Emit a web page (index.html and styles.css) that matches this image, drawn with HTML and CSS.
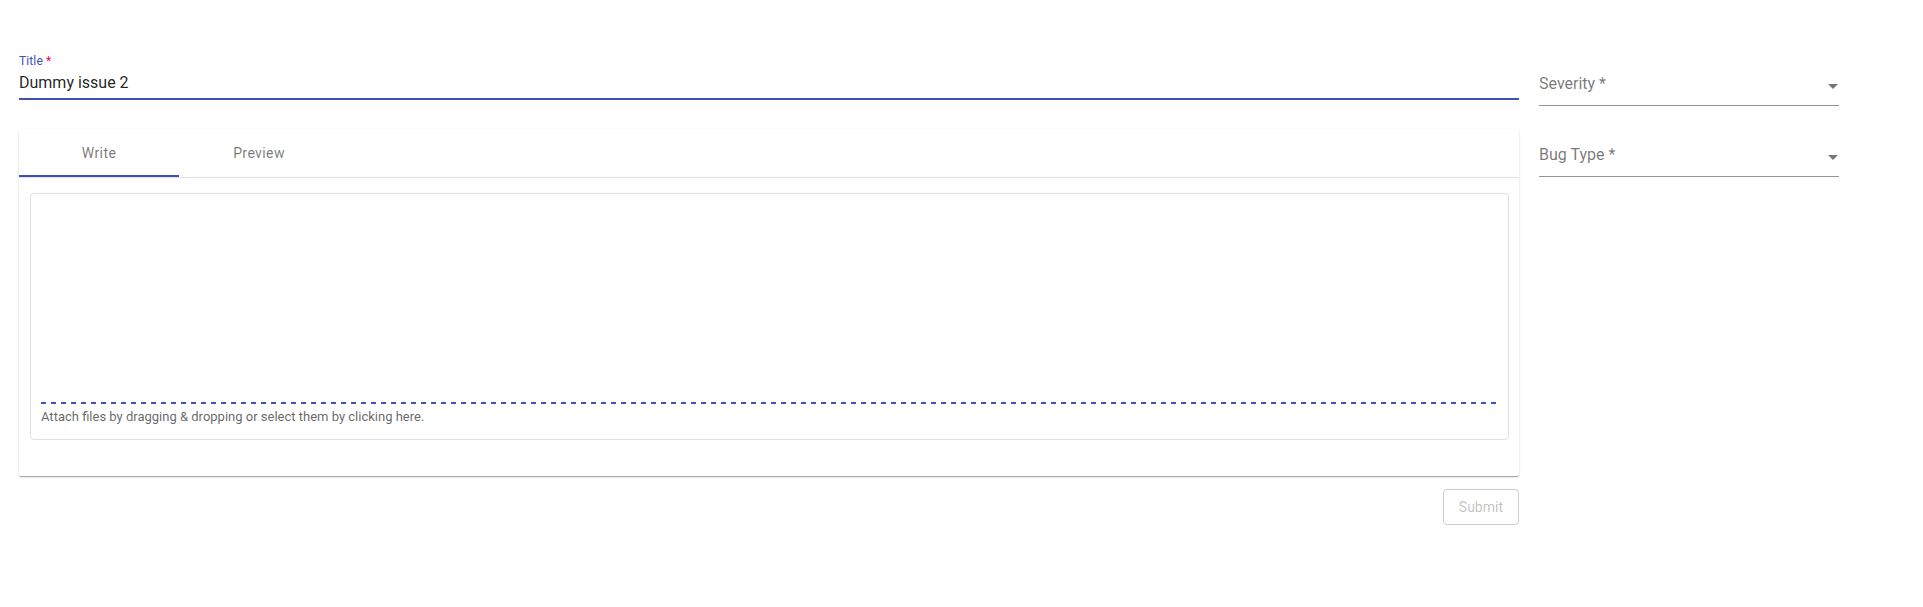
FILE: index.html
```html
<!DOCTYPE html>
<html lang="en">
<head>
<meta charset="utf-8">
<title>New issue</title>
<link rel="stylesheet" href="styles.css">
</head>
<body>
<div class="page">
  <div class="main">
    <div class="title-field">
      <label class="title-label">Title<span class="asterisk"> *</span></label>
      <div class="title-input">Dummy issue 2</div>
    </div>
    <div class="card">
      <div class="tabs">
        <div class="tab tab-active">Write</div>
        <div class="tab">Preview</div>
      </div>
      <div class="card-body">
        <div class="editor">
          <div class="editor-area"></div>
          <div class="dashes"></div>
          <div class="attach">Attach files by dragging &amp; dropping or select them by clicking here.</div>
        </div>
      </div>
    </div>
    <div class="actions">
      <button class="submit" disabled>Submit</button>
    </div>
  </div>
  <div class="side">
    <div class="select">
      <span class="select-label">Severity *</span>
      <svg class="arrow" width="10" height="5" viewBox="0 0 10 5"><path d="M0 0l5 5 5-5z" fill="rgba(0,0,0,0.54)"/></svg>
    </div>
    <div class="select select-second">
      <span class="select-label">Bug Type *</span>
      <svg class="arrow" width="10" height="5" viewBox="0 0 10 5"><path d="M0 0l5 5 5-5z" fill="rgba(0,0,0,0.54)"/></svg>
    </div>
  </div>
</div>
</body>
</html>
```
FILE: styles.css
```css
html, body {
  margin: 0;
  padding: 0;
  background: #ffffff;
}
body {
  font-family: Roboto, "Liberation Sans", Arial, sans-serif;
  color: rgba(0, 0, 0, 0.87);
}
.page {
  display: flex;
  align-items: flex-start;
  gap: 20px;
  padding: 55px 84px 0 19px;
}
.main {
  flex: 1;
  min-width: 0;
}
.side {
  width: 300px;
  flex: none;
  padding-top: 15px;
}
.title-field {
  display: flex;
  flex-direction: column;
}
.title-label {
  font-size: 12px;
  line-height: 12px;
  height: 12px;
  color: #3f51b5;
  letter-spacing: 0.01em;
}
.asterisk {
  color: #f50057;
}
.title-input {
  font-size: 16px;
  line-height: 19px;
  padding: 6px 0 6px;
  border-bottom: 2px solid #3f51b5;
  color: rgba(0, 0, 0, 0.87);
}
.card {
  margin-top: 29px;
  background: #fff;
  border-radius: 2px;
  box-shadow: 0 2px 1px -1px rgba(0,0,0,0.2), 0 1px 1px 0 rgba(0,0,0,0.14), 0 1px 3px 0 rgba(0,0,0,0.12);
}
.tabs {
  display: flex;
  height: 48px;
  border-bottom: 1px solid #e0e0e0;
}
.tab {
  width: 160px;
  height: 48px;
  box-sizing: border-box;
  display: flex;
  align-items: center;
  justify-content: center;
  padding-bottom: 1px;
  font-size: 14px;
  font-weight: 400;
  letter-spacing: 0.02857em;
  color: rgba(0, 0, 0, 0.54);
}
.tab-active {
  border-bottom: 2px solid #3f51b5;
  padding-top: 1px;
  padding-bottom: 0;
}
.card-body {
  padding: 15px 10px 36px 11px;
}
.editor {
  border: 1px solid #e0e0e0;
  border-radius: 4px;
  padding: 0 11px 14px 10px;
}
.editor-area {
  height: 208px;
}
.dashes {
  height: 2px;
  background: repeating-linear-gradient(to right, #3f51b5 0 5px, transparent 5px 10px);
}
.attach {
  padding-top: 5px;
  font-size: 13px;
  line-height: 16px;
  color: rgba(0, 0, 0, 0.62);
}
.actions {
  display: flex;
  justify-content: flex-end;
  margin-top: 13px;
}
.submit {
  font-family: Roboto, "Liberation Sans", Arial, sans-serif;
  font-size: 14px;
  font-weight: 400;
  letter-spacing: normal;
  line-height: 24px;
  padding: 5px 15px;
  background: #fff;
  border: 1px solid #cccccc;
  border-radius: 4px;
  color: rgba(0, 0, 0, 0.26);
  height: 36px;
}
.select {
  position: relative;
  padding-top: 4px;
  padding-bottom: 12px;
  border-bottom: 1px solid rgba(0, 0, 0, 0.42);
}
.select-second {
  margin-top: 35px;
}
.select-label {
  display: block;
  font-size: 16px;
  line-height: 19px;
  color: rgba(0, 0, 0, 0.54);
}
.arrow {
  position: absolute;
  right: 1px;
  top: 14px;
}
```
